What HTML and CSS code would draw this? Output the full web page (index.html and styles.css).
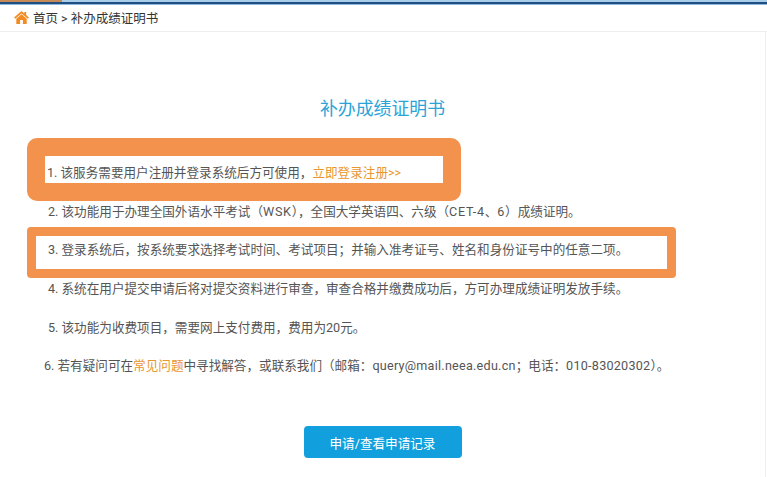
FILE: index.html
```html
<!DOCTYPE html>
<html lang="zh-CN">
<head>
    <meta charset="UTF-8">
    <title>补办成绩证明书</title>
    <link rel="stylesheet" href="styles.css">
</head>
<body>
    <div class="top-bar"><div class="top-bar-accent"></div></div>
    <div class="breadcrumb">
        <svg class="home-icon" viewBox="0 0 16 14"><path d="M8 0L0 7 1.2 8.4 8 2.6 14.8 8.4 16 7 13 4.4V1H11V2.6Z"/><path d="M8 3.6L2.4 8.4V14H6.5V9.6H9.5V14H13.6V8.4Z"/></svg>
        <span>首页 &gt; 补办成绩证明书</span>
    </div>
    <div class="content">
        <h1 class="page-title">补办成绩证明书</h1>
        <ul class="notes">
            <li class="note note-one"><span>1. 该服务需要用户注册并登录系统后方可使用，<a class="link">立即登录注册&gt;&gt;</a></span></li>
            <li class="note"><span>2. 该功能用于办理全国外语水平考试（<b class="code">WSK</b>），全国大学英语四、六级（<b class="code">CET-4</b>、<b class="code">6</b>）成绩证明。</span></li>
            <li class="note note-three"><span>3. 登录系统后，按系统要求选择考试时间、考试项目；并输入准考证号、姓名和身份证号中的任意二项。</span></li>
            <li class="note"><span>4. 系统在用户提交申请后将对提交资料进行审查，审查合格并缴费成功后，方可办理成绩证明发放手续。</span></li>
            <li class="note"><span>5. 该功能为收费项目，需要网上支付费用，费用为20元。</span></li>
            <li class="note note-six"><span>6. 若有疑问可在<a class="link">常见问题</a>中寻找解答，或联系我们（邮箱：<b class="contact">query@mail.neea.edu.cn</b>；电话：<b class="contact">010-83020302</b>）。</span></li>
        </ul>
        <div class="actions"><button class="apply-button">申请/查看申请记录</button></div>
    </div>
</body>
</html>
```

FILE: styles.css
```css
html, body {
    margin: 0;
    padding: 0;
    background-color: #fff;
}
body {
    width: 767px;
    height: 477px;
    overflow: hidden;
    font-family: Roboto, "Noto Sans CJK SC", sans-serif;
    color: #555;
    font-size: 12.6px;
}
.top-bar {
    height: 5px;
    background-color: #1f4f80;
    border-top: 2px solid #a9cdea;
    border-bottom: 1px solid #8fb8dc;
    box-sizing: border-box;
}
.top-bar-accent {
    width: 62px;
    height: 2px;
    margin-top: -2px;
    background-color: #c58a55;
}
.breadcrumb {
    display: flex;
    align-items: center;
    gap: 4px;
    height: 24px;
    padding-left: 14px;
    padding-bottom: 2px;
    color: #333;
    font-size: 12.5px;
    border-bottom: 1px solid #eee;
}
.home-icon {
    width: 15px;
    height: 13px;
    fill: #f28c22;
}
.content {
    margin-right: 1px;
    height: 445px;
    border-right: 1px solid #eee;
}
.page-title {
    margin: 0;
    padding-top: 66px;
    text-align: center;
    font-size: 17.9px;
    line-height: 22px;
    font-weight: normal;
    color: #2ba3d6;
}
.notes {
    list-style-type: none;
    margin: 34px 0 0;
    padding: 0;
}
.note {
    height: 38.7px;
    line-height: 38.7px;
    white-space: nowrap;
    position: relative;
    padding-left: 48px;
}
.note-one { padding-left: 47px; }
.note-six { padding-left: 44px; }
.note span {
    position: relative;
}
.note-one::before {
    content: "";
    position: absolute;
    left: 27px;
    top: -16px;
    width: 434px;
    height: 63px;
    box-sizing: border-box;
    border: 18px solid #f2924c;
    border-radius: 10px;
}
.note-three::before {
    content: "";
    position: absolute;
    left: 27px;
    top: -4px;
    width: 649px;
    height: 51px;
    box-sizing: border-box;
    border: 9px solid #f2924c;
    border-radius: 4px;
}
.code {
    font-weight: normal;
    letter-spacing: 0.7px;
}
.contact {
    font-weight: normal;
    letter-spacing: 0.25px;
}
.link {
    color: #e8972e;
}
.actions {
    display: flex;
    justify-content: center;
    margin-top: 40px;
}
.apply-button {
    width: 158px;
    height: 32px;
    border: none;
    border-radius: 4px;
    background-color: #119fde;
    color: #fff;
    font-family: inherit;
    font-size: 12.6px;
}
```
